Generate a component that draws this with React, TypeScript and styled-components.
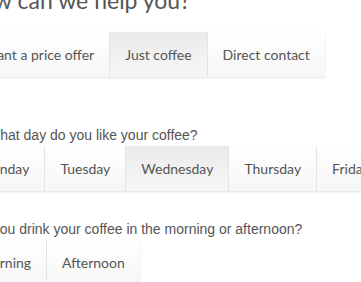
import styled, { createGlobalStyle } from "styled-components";
import { useState } from "react";

const GlobalStyle = createGlobalStyle`
  html, body {
    margin: 0;
    padding: 0;
    background: #ffffff;
    overflow: hidden;
  }
`;

const Page = styled.div`
  margin-left: -36px;
  margin-top: -14px;
  display: flex;
  flex-direction: column;
`;

const Heading = styled.h2`
  margin: 0;
  font-family: Lato, "Open Sans", sans-serif;
  font-weight: 400;
  font-size: 23px;
  line-height: 28px;
  color: #555555;
`;

const Question = styled.div<{ $indent: number }>`
  font-family: "Liberation Sans", Arial, sans-serif;
  font-size: 14px;
  line-height: 16px;
  color: #555555;
  padding-left: ${({ $indent }) => $indent}px;
  margin-bottom: 3px;
`;

const Section = styled.div<{ $top: number }>`
  margin-top: ${({ $top }) => $top}px;
`;

const Group = styled.div`
  display: inline-flex;
  box-shadow: 0 1px 2px rgba(0, 0, 0, 0.12);
`;

const Option = styled.button<{ $active?: boolean }>`
  height: 45px;
  padding: 0 15px;
  border: none;
  border-right: 1px solid #e4e4e4;
  font-family: Lato, "Open Sans", sans-serif;
  font-size: 14px;
  color: #555555;
  cursor: pointer;
  background: ${({ $active }) =>
    $active
      ? "linear-gradient(#e9e9e9, #f4f4f4 70%, #f6f6f6)"
      : "linear-gradient(#ffffff, #f6f6f6)"};
  &:last-child {
    border-right: none;
  }
`;

function Options({ items, initial }: { items: string[]; initial: number }) {
  const [active, setActive] = useState(initial);
  return (
    <Group>
      {items.map((item, i) => (
        <Option key={item} $active={i === active} onClick={() => setActive(i)}>
          {item}
        </Option>
      ))}
    </Group>
  );
}

export default function App() {
  return (
    <>
      <GlobalStyle />
      <Page>
        <Heading>How can we help you?</Heading>
        <Section $top={18}>
          <Options
            items={["I want a price offer", "Just coffee", "Direct contact"]}
            initial={1}
          />
        </Section>
        <Section $top={50}>
          <Question $indent={23}>What day do you like your coffee?</Question>
          <Options
            items={["Monday", "Tuesday", "Wednesday", "Thursday", "Friday"]}
            initial={2}
          />
        </Section>
        <Section $top={30}>
          <Question $indent={7}>
            Do you drink your coffee in the morning or afternoon?
          </Question>
          <Options items={["Morning", "Afternoon"]} initial={-1} />
        </Section>
      </Page>
    </>
  );
}
